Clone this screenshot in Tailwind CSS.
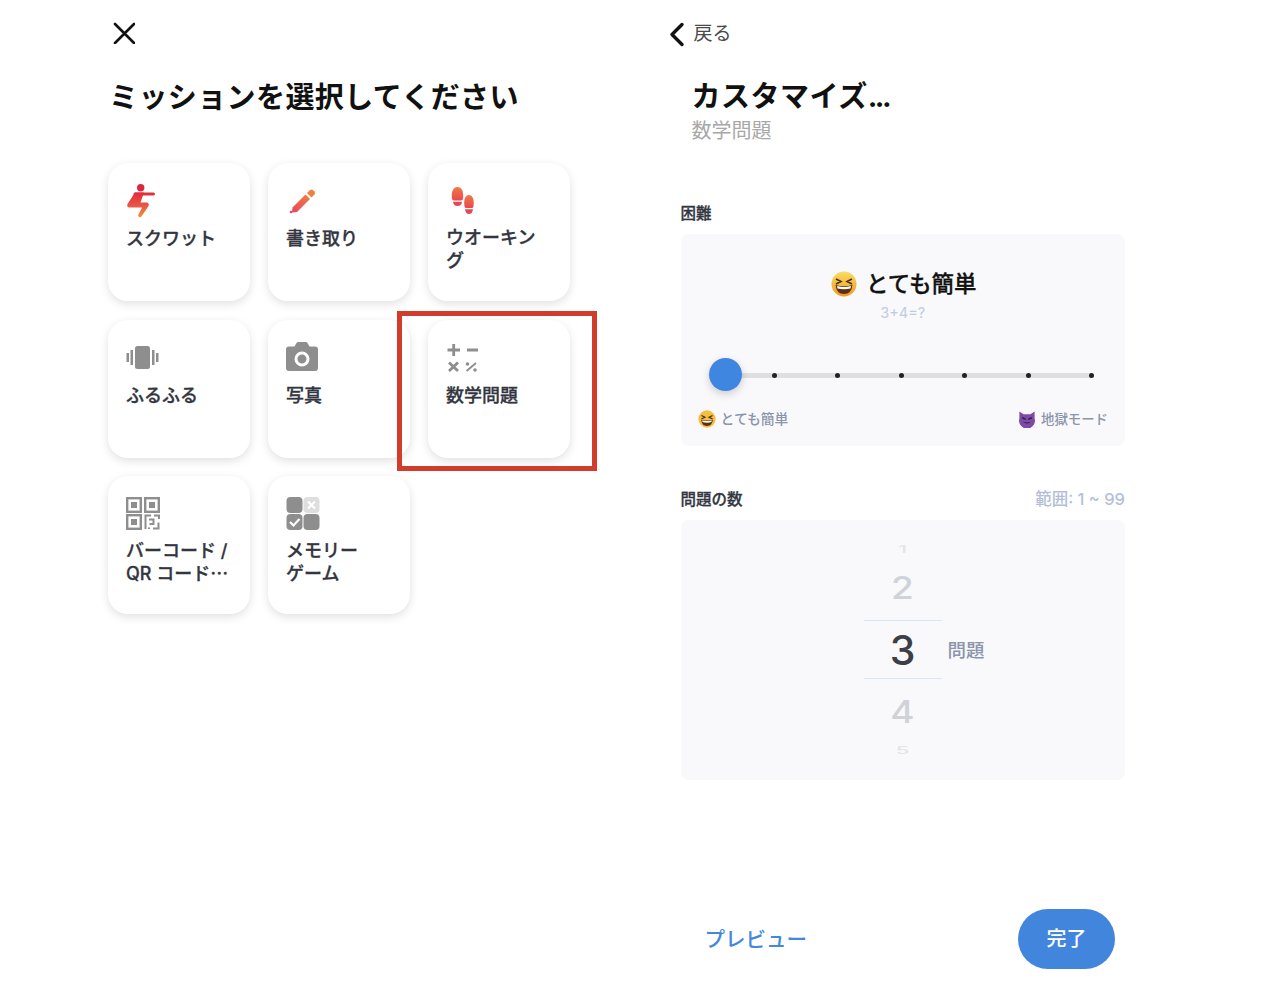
<!doctype html>
<html lang="ja">
<head>
<meta charset="UTF-8" />
<title>ミッション</title>
<script src="https://cdn.jsdelivr.net/npm/@tailwindcss/browser@4"></script>
</head>
<body class="bg-white font-['Inter','Noto_Sans_CJK_JP',sans-serif] text-[#33353f]">
<div class="relative flex w-[1266px] h-[998px] overflow-hidden">

  <!-- left screen -->
  <div class="w-[660px] pl-[108px] shrink-0">
    <div class="h-[66px] pt-[22px] pl-[5px]">
      <svg width="22" height="22" viewBox="0 0 22 22" fill="none" stroke="#111" stroke-width="2.600" stroke-linecap="round"><path d="M2 2 L21 21 M21 2 L2 21"/></svg>
    </div>
    <h1 class="h-[97px] pl-[1px] text-[29px] leading-[63px] font-bold text-[#111] tracking-[0.4px]">ミッションを選択してください</h1>

    <div class="grid grid-cols-[142px_142px_142px] auto-rows-[138px] gap-x-[18px] gap-y-[18.5px]">
      <div class="rounded-[20px] bg-white shadow-[0_3px_10px_rgba(0,0,0,0.12)] px-[18px] pt-[20px]">
        <svg class="h-[36px] w-[34px]" viewBox="0 0 34 36">
          <defs><linearGradient id="g1" gradientUnits="userSpaceOnUse" x1="0" y1="8" x2="0" y2="34"><stop offset="0" stop-color="#e0263f"/><stop offset="0.6" stop-color="#ea5a45"/><stop offset="1" stop-color="#f0913a"/></linearGradient></defs>
          <circle cx="14.700" cy="4.700" r="3.700" fill="#e0263f"/>
          <path d="M9 11 H27.500" stroke="#e0303f" stroke-width="3" stroke-linecap="round" fill="none"/>
          <path d="M9 9.500 H18 L14.500 19.500 H21 Q23.500 20 22.500 23 L15.500 33.500 Q13 35.500 12 32.500 L16 24.500 H3 Q0.500 24 1.500 21 Z" fill="url(#g1)"/>
        </svg>
        <p class="mt-[8px] text-[18px] leading-[23px] font-medium [-webkit-text-stroke:0.3px]">スクワット</p>
      </div>
      <div class="rounded-[20px] bg-white shadow-[0_3px_10px_rgba(0,0,0,0.12)] px-[18px] pt-[20px]">
        <svg class="h-[36px] w-[34px]" viewBox="0 0 34 36">
          <defs><linearGradient id="g2" x1="0" y1="1" x2="1" y2="0"><stop offset="0" stop-color="#e8455f"/><stop offset="1" stop-color="#f08040"/></linearGradient></defs>
          <path d="M6.500 24.500 L19.500 11.500 L24 16 L11 29 L6 29.500 Z" fill="url(#g2)"/>
          <path d="M21 10 L24 7 Q25.500 5.800 27 7 L28.500 8.500 Q29.500 10 28.500 11.500 L25.500 14.500 Z" fill="#f08040"/>
          <circle cx="5" cy="29" r="1.300" fill="#e8455f"/>
        </svg>
        <p class="mt-[8px] text-[18px] leading-[23px] font-medium [-webkit-text-stroke:0.3px]">書き取り</p>
      </div>
      <div class="rounded-[20px] bg-white shadow-[0_3px_10px_rgba(0,0,0,0.12)] px-[18px] pt-[20px]">
        <svg class="h-[36px] w-[34px]" viewBox="0 0 34 36">
          <defs><linearGradient id="g3" x1="0" y1="0" x2="0" y2="1"><stop offset="0" stop-color="#f07a45"/><stop offset="1" stop-color="#e8484f"/></linearGradient></defs>
          <path d="M6 15.500 C5 8 7.500 4 11.500 4 C15.500 4 18 8 17 15.500 Q16.800 17.500 15 17.500 H8 Q6.200 17.500 6 15.500 Z" fill="url(#g3)"/>
          <path d="M7 18.800 H16 Q15.500 23 11.500 23 Q7.500 23 7 18.800 Z" fill="#e8484f"/>
          <path d="M18.500 23.500 C17.500 16 19.500 12 23 12 C26.500 12 28.500 16 27.500 23.500 Q27.300 25 25.500 25 H20.500 Q18.700 25 18.500 23.500 Z" fill="url(#g3)"/>
          <path d="M19 26.300 H27 Q26.500 31 23 31 Q19.500 31 19 26.300 Z" fill="#e8484f"/>
        </svg>
        <p class="mt-[8px] text-[18px] leading-[22.500px] font-medium [-webkit-text-stroke:0.3px]">ウオーキン<br />グ</p>
      </div>

      <div class="rounded-[20px] bg-white shadow-[0_3px_10px_rgba(0,0,0,0.12)] px-[18px] pt-[20px]">
        <svg class="h-[36px] w-[34px]" viewBox="0 0 34 36" fill="#8e8e8e">
          <rect x="9" y="6" width="15" height="23" rx="2.500"/>
          <rect x="4.500" y="10" width="2.500" height="15"/>
          <rect x="0.500" y="13" width="2.500" height="9"/>
          <rect x="26" y="10" width="2.500" height="15"/>
          <rect x="30" y="13" width="2.500" height="9"/>
        </svg>
        <p class="mt-[8px] text-[18px] leading-[23px] font-medium [-webkit-text-stroke:0.3px]">ふるふる</p>
      </div>
      <div class="rounded-[20px] bg-white shadow-[0_3px_10px_rgba(0,0,0,0.12)] px-[18px] pt-[20px]">
        <svg class="h-[36px] w-[34px]" viewBox="0 0 34 36">
          <path d="M3 6.500 H8.500 L10.500 3 Q11 2 12.500 2 H19.500 Q21 2 21.500 3 L23.500 6.500 H29 Q32 6.500 32 9.500 V28 Q32 31 29 31 H3 Q0 31 0 28 V9.500 Q0 6.500 3 6.500 Z" fill="#8e8e8e"/>
          <circle cx="16" cy="19" r="6" fill="none" stroke="#fff" stroke-width="3"/>
        </svg>
        <p class="mt-[8px] text-[18px] leading-[23px] font-medium [-webkit-text-stroke:0.3px]">写真</p>
      </div>
      <div class="rounded-[20px] bg-white shadow-[0_3px_10px_rgba(0,0,0,0.12)] px-[18px] pt-[20px]">
        <svg class="h-[36px] w-[34px]" viewBox="0 0 34 36" stroke="#8e8e8e" stroke-width="2.800" fill="none">
          <path d="M1.500 10 H14 M7.700 4 V16 M21 10 H32"/>
          <path d="M3 22.500 L12 31 M12 22.500 L3 31"/>
          <path d="M20.500 31 L30 23" stroke-width="1.800"/>
          <circle cx="21.500" cy="24" r="1.800" fill="#8e8e8e" stroke="none"/>
          <circle cx="29" cy="30" r="1.800" fill="#8e8e8e" stroke="none"/>
        </svg>
        <p class="mt-[8px] text-[18px] leading-[23px] font-medium [-webkit-text-stroke:0.3px]">数学問題</p>
      </div>

      <div class="rounded-[20px] bg-white shadow-[0_3px_10px_rgba(0,0,0,0.12)] px-[18px] pt-[20px]">
        <svg class="h-[36px] w-[34px]" viewBox="0 0 34 36" fill="none" stroke="#8e8e8e" stroke-width="2.400">
          <rect x="1.200" y="2.200" width="13.600" height="13.600"/><rect x="5" y="6" width="6" height="6" fill="#8e8e8e" stroke="none"/>
          <rect x="19.200" y="2.200" width="13.600" height="13.600"/><rect x="23" y="6" width="6" height="6" fill="#8e8e8e" stroke="none"/>
          <rect x="1.200" y="19.200" width="13.600" height="13.600"/><rect x="5" y="23" width="6" height="6" fill="#8e8e8e" stroke="none"/>
          <path d="M19.500 33 V19.500 H25 M28 19.500 H33 V23 M23 23.500 H27.500 V28 H23.500 M23 31.500 V33 M27 32.500 H32.500 V26.500" stroke-width="2"/>
        </svg>
        <p class="mt-[7px] text-[18px] leading-[23px] font-medium [-webkit-text-stroke:0.3px]">バーコード /<br />QR コード⋯</p>
      </div>
      <div class="rounded-[20px] bg-white shadow-[0_3px_10px_rgba(0,0,0,0.12)] px-[18px] pt-[20px]">
        <svg class="h-[36px] w-[34px]" viewBox="0 0 34 36">
          <rect x="0.500" y="1" width="16" height="16" rx="4" fill="#8e8e8e"/>
          <rect x="17.500" y="1" width="16" height="16" rx="4" fill="#dedede"/>
          <rect x="0.500" y="18" width="16" height="16" rx="4" fill="#8e8e8e"/>
          <rect x="17.500" y="18" width="16" height="16" rx="4" fill="#8e8e8e"/>
          <path d="M22 5.500 L29 12.500 M29 5.500 L22 12.500" stroke="#fff" stroke-width="2.200"/>
          <path d="M4 26 L7.500 29.500 L13.500 23" stroke="#fff" stroke-width="2.200" fill="none"/>
        </svg>
        <p class="mt-[7px] text-[18px] leading-[23px] font-medium [-webkit-text-stroke:0.3px]">メモリー<br />ゲーム</p>
      </div>
    </div>
  </div>

  <!-- right screen -->
  <div class="w-[466px] ml-[20.500px] shrink-0 flex flex-col h-full">
    <div class="h-[66px] -ml-[12px] pt-[21px] flex items-start gap-[9px]">
      <svg class="mt-[1px]" width="16" height="25" viewBox="0 0 16 25" fill="none" stroke="#111" stroke-width="3.400" stroke-linecap="round" stroke-linejoin="round"><path d="M13 2.500 L3 12.500 L13 22.500"/></svg>
      <span class="text-[19px] leading-[26px] text-[#4a4a4a]">戻る</span>
    </div>
    <h2 class="ml-[11px] h-[50px] text-[29px] leading-[62px] font-bold text-[#111] tracking-[0.5px]">カスタマイズ<span class="tracking-[-2.500px]">...</span></h2>
    <p class="ml-[11px] mt-[1px] text-[20px] leading-[28px] text-[#a8a8a8]">数学問題</p>

    <div class="mt-[58px] h-[21px] text-[15.500px] leading-[21px] font-medium [-webkit-text-stroke:0.3px]">困難</div>
    <div class="mt-[10px] w-[444.500px] h-[212px] rounded-[8px] bg-[#f9f9fb] px-[17px] pt-[33px]">
      <div class="flex items-center justify-center gap-[9px] pl-[2px] h-[34px]">
        <svg width="26" height="26" viewBox="0 0 26 26"><defs><linearGradient id="e1" x1="0" y1="0" x2="0" y2="1"><stop offset="0" stop-color="#fbdc62"/><stop offset="1" stop-color="#ee9a22"/></linearGradient></defs><circle cx="13" cy="13" r="12.500" fill="url(#e1)"/><path d="M5 8 L10 10.500 L5 13 M21 8 L16 10.500 L21 13" stroke="#4a2f12" stroke-width="1.600" fill="none"/><path d="M4.500 14 Q13 16.500 21.500 14 Q20.500 23 13 23 Q5.500 23 4.500 14 Z" fill="#5c2e12"/><path d="M6 15 Q13 17 20 15 L19.500 17.500 Q13 19 6.500 17.500 Z" fill="#fff"/></svg>
        <span class="text-[22.500px] leading-[34px] font-medium text-[#111] [-webkit-text-stroke:0.3px]">とても簡単</span>
      </div>
      <p class="mt-[2px] text-center text-[14.500px] leading-[20px] text-[#c0cae2]">3+4=?</p>
      <div class="relative mt-[35px] h-[34px] mx-[11px]">
        <div class="absolute left-[16px] right-[3px] top-[14.500px] h-[5px] bg-[#dfdfe2] rounded-full"></div>
        <div class="absolute left-[63.500px] right-[3px] top-[14.500px] h-[5px] flex justify-between items-center">
          <span class="w-[5px] h-[5px] rounded-full bg-[#222]"></span>
          <span class="w-[5px] h-[5px] rounded-full bg-[#222]"></span>
          <span class="w-[5px] h-[5px] rounded-full bg-[#222]"></span>
          <span class="w-[5px] h-[5px] rounded-full bg-[#222]"></span>
          <span class="w-[5px] h-[5px] rounded-full bg-[#222]"></span>
          <span class="w-[5px] h-[5px] rounded-full bg-[#222]"></span>
        </div>
        <div class="absolute left-0 top-0 w-[33px] h-[33px] rounded-full bg-[#3f86e0] shadow-[0_3px_8px_rgba(0,0,0,0.18)]"></div>
      </div>
      <div class="mt-[17px] flex items-center justify-between h-[20px]">
        <div class="flex items-center gap-[5px]">
          <svg width="18" height="18" viewBox="0 0 26 26"><circle cx="13" cy="13" r="12.500" fill="#f5bd42"/><path d="M5 8 L10 10.500 L5 13 M21 8 L16 10.500 L21 13" stroke="#4a2f12" stroke-width="1.800" fill="none"/><path d="M4.500 14 Q13 16.500 21.500 14 Q20.500 23 13 23 Q5.500 23 4.500 14 Z" fill="#5c2e12"/><path d="M6 15 Q13 17 20 15 L19.500 17.500 Q13 19 6.500 17.500 Z" fill="#fff"/></svg>
          <span class="text-[13.800px] leading-[20px] font-medium text-[#8a94ab]">とても簡単</span>
        </div>
        <div class="flex items-center gap-[5px]">
          <svg width="18" height="18" viewBox="0 0 26 26"><path d="M2 2 L8 6 H18 L24 2 L24 12 A11.500 11.500 0 1 1 2 12 Z" fill="#7d4aa5"/><path d="M6 11 L11 13.500 M20 11 L15 13.500" stroke="#2d1840" stroke-width="2"/><path d="M7 17 Q13 22 19 17 Q13 19 7 17 Z" fill="#2d1840"/></svg>
          <span class="text-[13.400px] leading-[20px] font-medium text-[#8a94ab]">地獄モード</span>
        </div>
      </div>
    </div>

    <div class="mt-[43px] w-[444.500px] h-[21px] flex items-center justify-between">
      <span class="text-[15.500px] leading-[21px] font-medium [-webkit-text-stroke:0.3px]">問題の数</span>
      <span class="text-[16.500px] leading-[21px] font-medium text-[#b3bfd9]">範囲: 1 ~ 99</span>
    </div>
    <div class="mt-[9.500px] w-[444.500px] h-[260px] rounded-[8px] bg-[#f9f9fb] flex">
      <div class="ml-[183px] w-[78px] flex flex-col items-center pt-[19px]">
        <div class="h-[20px] text-[22px] leading-[20px] font-medium text-[#e3e5e9] scale-y-[0.45]">1</div>
        <div class="mt-[9px] h-[40px] text-[37px] leading-[40px] font-medium text-[#cfd3d9] scale-y-[0.85]">2</div>
        <div class="mt-[12px] w-full h-[59px] border-y border-[#dbe5f5] text-[41px] leading-[59px] font-medium text-center text-[#3c3f47]">3</div>
        <div class="mt-[13px] h-[40px] text-[37px] leading-[40px] font-medium text-[#cfd3d9] scale-y-[0.85]">4</div>
        <div class="mt-[8px] h-[20px] text-[22px] leading-[20px] font-medium text-[#e3e5e9] scale-y-[0.45]">5</div>
      </div>
      <span class="ml-[6px] mt-[117px] text-[18.500px] leading-[26px] font-medium text-[#8a94ab]">問題</span>
    </div>

    <div class="mt-auto mb-[29px] w-[434.500px] flex items-center justify-between pl-[24px]">
      <span class="mt-[2px] text-[20.500px] leading-[30px] font-medium text-[#4488dd]">プレビュー</span>
      <button class="w-[97px] h-[60px] rounded-full bg-[#4285dc] text-white text-[20px] font-medium">完了</button>
    </div>
  </div>

  <!-- highlight box -->
  <div class="absolute left-[397px] top-[311px] w-[200px] h-[160px] border-[5px] border-[#d23c2a]"></div>
</div>
</body>
</html>
